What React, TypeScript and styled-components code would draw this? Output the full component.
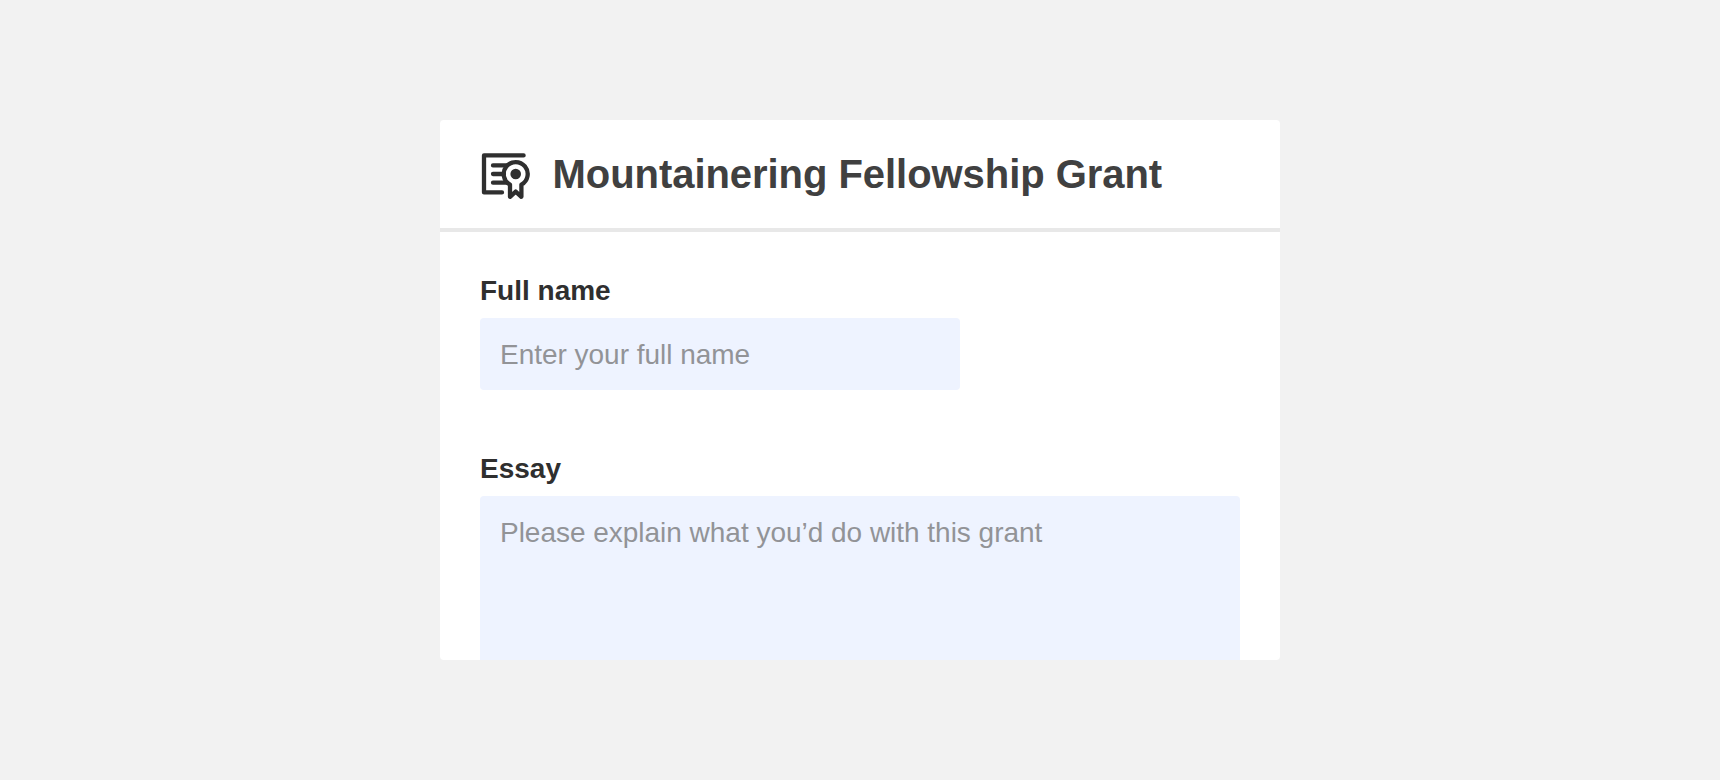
import React from "react";
import styled, { createGlobalStyle, css } from "styled-components";

const GlobalStyle = createGlobalStyle`
  *, *::before, *::after { box-sizing: border-box; }
  body {
    margin: 0;
    background: #f2f2f2;
    font-family: "Liberation Sans", Helvetica, Arial, sans-serif;
  }
`;

const Page = styled.main`
  display: flex;
  justify-content: center;
  height: 780px;
  padding: 120px 0;
  overflow: hidden;
`;

const Card = styled.form`
  display: flex;
  flex-direction: column;
  width: 840px;
  height: 540px;
  border-radius: 4px;
  background: #fff;
  overflow: hidden;
`;

const Header = styled.header`
  display: flex;
  flex: none;
  align-items: center;
  gap: 20px;
  height: 112px;
  padding: 0 40px;
  border-bottom: 4px solid #e8e8e8;
`;

const Title = styled.h1`
  margin: 0;
  padding-left: 0.5px;
  color: #404040;
  font-size: 40px;
  line-height: 48px;
  letter-spacing: -0.05px;
  white-space: nowrap;
`;

const Fields = styled.div`
  display: flex;
  flex-direction: column;
  gap: 60px;
  padding: 40px 40px 0;
`;

const Field = styled.div`
  display: flex;
  flex-direction: column;
  gap: 8px;
`;

const Label = styled.label`
  color: #2f2f2f;
  font-size: 28px;
  font-weight: 700;
  line-height: 38px;
`;

const controlStyle = css`
  display: block;
  margin: 0;
  border: 0;
  outline: 0;
  border-radius: 4px;
  background: #eef3ff;
  color: #2f2f2f;
  font-family: inherit;
  font-size: 28px;
  line-height: 32px;
  letter-spacing: -0.02px;
  padding: 21px 20px 19px;
  resize: none;

  &::placeholder {
    color: #929397;
    opacity: 1;
  }
`;

const TextInput = styled.input`
  ${controlStyle}
  width: 480px;
  height: 72px;
`;

const TextArea = styled.textarea`
  ${controlStyle}
  width: 100%;
  height: 240px;
`;

const Icon = styled.svg`
  flex: none;
  width: 52px;
  height: 52px;
  fill: none;
  stroke: #2f2f2f;
  stroke-width: 4.3;
  stroke-linecap: round;
  stroke-linejoin: round;
`;

const CertificateIcon = () => (
  <Icon viewBox="0 -2 52 52" aria-hidden="true">
    <path d="M43.6 5.4H4v37h18" />
    <path d="M13 15.4h14M13 24h11M13 32.7h14" />
    <path d="M30 46.8V34.6a12 12 0 1 1 11.4 0v12.2l-5.7-5.2z" />
    <circle cx="35.7" cy="24" r="5.3" fill="#2f2f2f" stroke="none" />
  </Icon>
);

export default function App() {
  return (
    <>
      <GlobalStyle />
      <Page>
        <Card>
          <Header>
            <CertificateIcon />
            <Title>Mountainering Fellowship Grant</Title>
          </Header>
          <Fields>
            <Field>
              <Label htmlFor="name">Full name</Label>
              <TextInput id="name" placeholder="Enter your full name" />
            </Field>
            <Field>
              <Label htmlFor="essay">Essay</Label>
              <TextArea
                id="essay"
                placeholder="Please explain what you’d do with this grant"
              />
            </Field>
          </Fields>
        </Card>
      </Page>
    </>
  );
}
